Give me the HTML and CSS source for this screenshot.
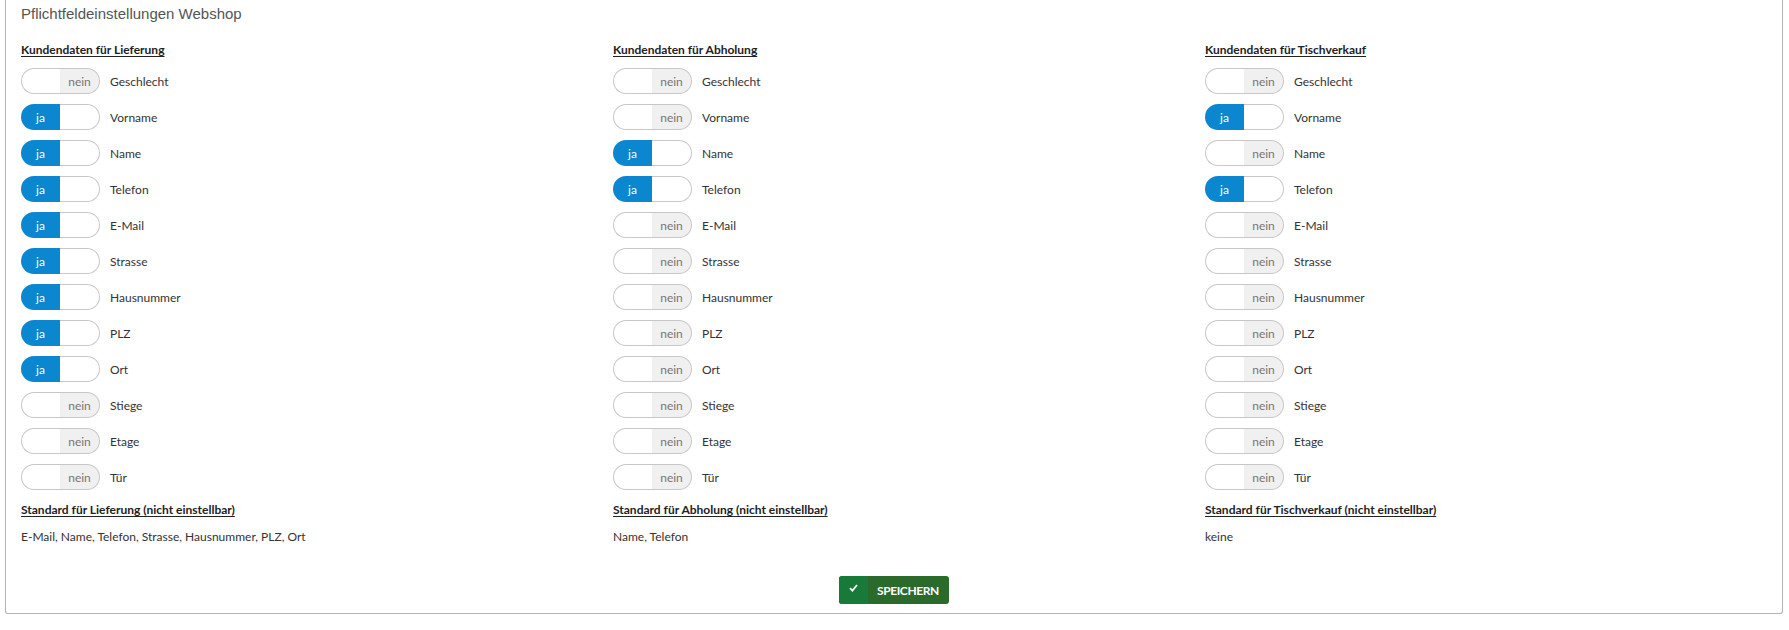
FILE: index.html
```html
<!DOCTYPE html>
<html lang="de">
<head>
<meta charset="utf-8">
<title>Pflichtfeldeinstellungen Webshop</title>
<link rel="stylesheet" href="styles.css">
</head>
<body>
<div class="page">
  <div class="panel">
    <div class="panel-title">Pflichtfeldeinstellungen Webshop</div>
    <div class="cols">
      <div class="col">
        <h4 class="sec">Kundendaten für Lieferung</h4>
        <div class="rows">
          <div class="row"><span class="sw off"><span class="l"></span><span class="r">nein</span></span><span class="lbl">Geschlecht</span></div>
          <div class="row"><span class="sw on"><span class="l">ja</span><span class="r"></span></span><span class="lbl">Vorname</span></div>
          <div class="row"><span class="sw on"><span class="l">ja</span><span class="r"></span></span><span class="lbl">Name</span></div>
          <div class="row"><span class="sw on"><span class="l">ja</span><span class="r"></span></span><span class="lbl">Telefon</span></div>
          <div class="row"><span class="sw on"><span class="l">ja</span><span class="r"></span></span><span class="lbl">E-Mail</span></div>
          <div class="row"><span class="sw on"><span class="l">ja</span><span class="r"></span></span><span class="lbl">Strasse</span></div>
          <div class="row"><span class="sw on"><span class="l">ja</span><span class="r"></span></span><span class="lbl">Hausnummer</span></div>
          <div class="row"><span class="sw on"><span class="l">ja</span><span class="r"></span></span><span class="lbl">PLZ</span></div>
          <div class="row"><span class="sw on"><span class="l">ja</span><span class="r"></span></span><span class="lbl">Ort</span></div>
          <div class="row"><span class="sw off"><span class="l"></span><span class="r">nein</span></span><span class="lbl">Stiege</span></div>
          <div class="row"><span class="sw off"><span class="l"></span><span class="r">nein</span></span><span class="lbl">Etage</span></div>
          <div class="row"><span class="sw off"><span class="l"></span><span class="r">nein</span></span><span class="lbl">Tür</span></div>
        </div>
        <h4 class="sec std">Standard für Lieferung (nicht einstellbar)</h4>
        <p class="vals">E-Mail, Name, Telefon, Strasse, Hausnummer, PLZ, Ort</p>
      </div>
      <div class="col">
        <h4 class="sec">Kundendaten für Abholung</h4>
        <div class="rows">
          <div class="row"><span class="sw off"><span class="l"></span><span class="r">nein</span></span><span class="lbl">Geschlecht</span></div>
          <div class="row"><span class="sw off"><span class="l"></span><span class="r">nein</span></span><span class="lbl">Vorname</span></div>
          <div class="row"><span class="sw on"><span class="l">ja</span><span class="r"></span></span><span class="lbl">Name</span></div>
          <div class="row"><span class="sw on"><span class="l">ja</span><span class="r"></span></span><span class="lbl">Telefon</span></div>
          <div class="row"><span class="sw off"><span class="l"></span><span class="r">nein</span></span><span class="lbl">E-Mail</span></div>
          <div class="row"><span class="sw off"><span class="l"></span><span class="r">nein</span></span><span class="lbl">Strasse</span></div>
          <div class="row"><span class="sw off"><span class="l"></span><span class="r">nein</span></span><span class="lbl">Hausnummer</span></div>
          <div class="row"><span class="sw off"><span class="l"></span><span class="r">nein</span></span><span class="lbl">PLZ</span></div>
          <div class="row"><span class="sw off"><span class="l"></span><span class="r">nein</span></span><span class="lbl">Ort</span></div>
          <div class="row"><span class="sw off"><span class="l"></span><span class="r">nein</span></span><span class="lbl">Stiege</span></div>
          <div class="row"><span class="sw off"><span class="l"></span><span class="r">nein</span></span><span class="lbl">Etage</span></div>
          <div class="row"><span class="sw off"><span class="l"></span><span class="r">nein</span></span><span class="lbl">Tür</span></div>
        </div>
        <h4 class="sec std">Standard für Abholung (nicht einstellbar)</h4>
        <p class="vals">Name, Telefon</p>
      </div>
      <div class="col">
        <h4 class="sec">Kundendaten für Tischverkauf</h4>
        <div class="rows">
          <div class="row"><span class="sw off"><span class="l"></span><span class="r">nein</span></span><span class="lbl">Geschlecht</span></div>
          <div class="row"><span class="sw on"><span class="l">ja</span><span class="r"></span></span><span class="lbl">Vorname</span></div>
          <div class="row"><span class="sw off"><span class="l"></span><span class="r">nein</span></span><span class="lbl">Name</span></div>
          <div class="row"><span class="sw on"><span class="l">ja</span><span class="r"></span></span><span class="lbl">Telefon</span></div>
          <div class="row"><span class="sw off"><span class="l"></span><span class="r">nein</span></span><span class="lbl">E-Mail</span></div>
          <div class="row"><span class="sw off"><span class="l"></span><span class="r">nein</span></span><span class="lbl">Strasse</span></div>
          <div class="row"><span class="sw off"><span class="l"></span><span class="r">nein</span></span><span class="lbl">Hausnummer</span></div>
          <div class="row"><span class="sw off"><span class="l"></span><span class="r">nein</span></span><span class="lbl">PLZ</span></div>
          <div class="row"><span class="sw off"><span class="l"></span><span class="r">nein</span></span><span class="lbl">Ort</span></div>
          <div class="row"><span class="sw off"><span class="l"></span><span class="r">nein</span></span><span class="lbl">Stiege</span></div>
          <div class="row"><span class="sw off"><span class="l"></span><span class="r">nein</span></span><span class="lbl">Etage</span></div>
          <div class="row"><span class="sw off"><span class="l"></span><span class="r">nein</span></span><span class="lbl">Tür</span></div>
        </div>
        <h4 class="sec std">Standard für Tischverkauf (nicht einstellbar)</h4>
        <p class="vals">keine</p>
      </div>
    </div>
    <div class="actions">
      <button class="btn-save" type="button">
        <span class="ico"><svg width="9" height="8" viewBox="0 0 9 8"><path d="M1 4.2 L3.4 6.6 L8 1" fill="none" stroke="#fff" stroke-width="1.8"/></svg></span>
        <span class="txt">SPEICHERN</span>
      </button>
    </div>
  </div>
</div>
</body>
</html>
```

FILE: styles.css
```css
html, body {
  margin: 0;
  padding: 0;
  background: #fff;
}
body {
  font-family: Lato, "Open Sans", sans-serif;
  color: #333;
}
.page {
  padding: 0 6px 0 5px;
}
.panel {
  border: 1px solid #b3b3b3;
  border-top: none;
  border-radius: 0 0 3px 3px;
  padding-bottom: 9px;
}
.panel-title {
  font-family: "Liberation Sans", Arial, sans-serif;
  font-size: 15px;
  line-height: 20px;
  color: #555;
  padding: 4px 15px 0;
  height: 42px;
  box-sizing: border-box;
}
.cols {
  display: grid;
  grid-template-columns: repeat(3, 1fr);
}
.col {
  padding: 0 15px;
}
.sec {
  margin: 0;
  font-size: 12px;
  line-height: 16px;
  font-weight: 700;
  color: #222;
  text-decoration: underline;
  text-underline-offset: 2px;
}
.rows {
  display: flex;
  flex-direction: column;
  gap: 10px;
  margin-top: 10px;
}
.row {
  display: flex;
  align-items: center;
  height: 26px;
}
.sw {
  display: flex;
  width: 79px;
  height: 26px;
  font-size: 12px;
  flex: none;
}
.sw .l, .sw .r {
  display: flex;
  align-items: center;
  justify-content: center;
  box-sizing: border-box;
  height: 26px;
}
.sw .l {
  width: 39px;
  border-radius: 13px 0 0 13px;
}
.sw .r {
  width: 40px;
  border: 1px solid #c8c8c8;
  border-left: none;
  border-radius: 0 13px 13px 0;
}
.sw.on .l {
  background: #0b87cf;
  color: #fff;
}
.sw.on .r {
  background: #fff;
}
.sw.off .l {
  background: #fff;
  border: 1px solid #c8c8c8;
  border-right: none;
}
.sw.off .r {
  background: #f0f0f0;
  color: #777;
}
.lbl {
  margin-left: 10px;
  font-size: 12px;
  color: #333;
}
.std {
  margin-top: 12px;
}
.vals {
  margin: 11px 0 0;
  font-size: 12px;
  line-height: 16px;
  color: #333;
}
.actions {
  display: flex;
  justify-content: center;
  margin-top: 31px;
}
.btn-save {
  display: flex;
  align-items: stretch;
  height: 28px;
  width: 110px;
  padding: 0;
  border: none;
  border-radius: 3px;
  overflow: hidden;
  background: #2a6a2b;
  cursor: pointer;
  font-family: Lato, sans-serif;
}
.btn-save .ico {
  width: 29px;
  background: #187a38;
  display: flex;
  align-items: center;
  justify-content: center;
  padding-bottom: 4px;
  box-sizing: border-box;
}
.btn-save .txt {
  flex: 1;
  display: flex;
  align-items: center;
  padding-left: 9px;
  color: #fff;
  font-size: 12px;
  font-weight: 700;
  letter-spacing: -0.4px;
}
```
